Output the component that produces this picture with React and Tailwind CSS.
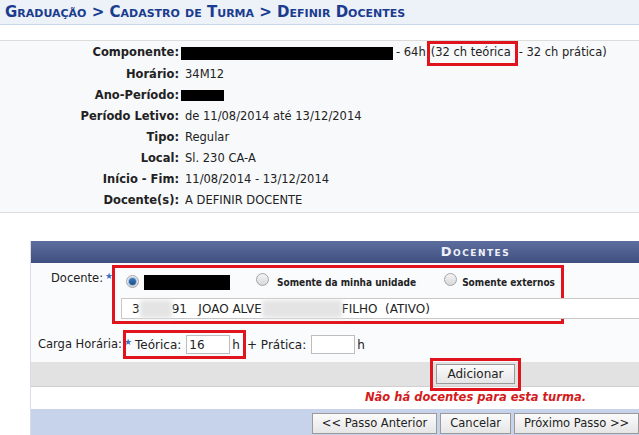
import React from "react";

const Red = ({ children, className = "" }) => (
  <span className={"inline-flex items-center border-[3px] border-[#e0141c] " + className}>{children}</span>
);

const Radio = ({ checked }) => (
  <span className="inline-flex h-[13px] w-[13px] items-center justify-center rounded-full border border-[#a5a5a5] bg-gradient-to-b from-[#f4f4f4] to-[#d8d8d8]">
    {checked && <span className="h-[7px] w-[7px] rounded-full bg-gradient-to-b from-[#3d7bbf] to-[#1d4f8a] ring-1 ring-[#9fc0e4]" />}
  </span>
);

const Star = () => <span className="ml-[2px] text-[9px] leading-none text-[#3b6fc0] self-start mt-[2px]">★</span>;

const Blur = ({ w }) => <span className={"inline-block h-[18px] bg-[#e4e4e4] blur-[2px] " + w} />;

const info = [
  ["Horário:", "34M12"],
  ["Ano-Período:", null],
  ["Período Letivo:", "de 11/08/2014 até 13/12/2014"],
  ["Tipo:", "Regular"],
  ["Local:", "Sl. 230 CA-A"],
  ["Início - Fim:", "11/08/2014 - 13/12/2014"],
  ["Docente(s):", "A DEFINIR DOCENTE"],
];

const Btn = ({ children }) => (
  <button className="h-[21px] whitespace-nowrap border border-[#9a9a9a] bg-gradient-to-b from-[#fbfbfb] to-[#e6e6e6] px-[9px] text-[11.5px] text-[#222]">
    {children}
  </button>
);

const cond = { fontFamily: "'DejaVu Sans Condensed', 'Liberation Sans', sans-serif" };

export default function App() {
  return (
    <div className="h-[435px] w-[639px] overflow-hidden bg-white text-[11.5px] text-[#222]" style={{ fontFamily: "'DejaVu Sans', Verdana, sans-serif" }}>
      <div className="flex h-[25px] items-center border-b border-[#c9d6ea] bg-[#edf1f8] pl-[5px]">
        <span className="whitespace-nowrap text-[15px] font-bold text-[#1a3c8f] [font-variant:small-caps]">Graduação &gt; Cadastro de Turma &gt; Definir Docentes</span>
      </div>

      <div className="mt-[15px] border-y border-[#dcdcdc] bg-[#f8f9fb] pb-[1px] pt-[1px]">
        <div className="flex h-[22px] items-center whitespace-nowrap">
          <div className="w-[180px] pr-[1px] text-right font-bold">Componente:</div>
          <span className="ml-[1px] h-[13px] w-[212px] bg-black" />
          <span className="ml-[3px]">- 64h</span>
          <Red className="ml-[1px] h-[25px] pl-[1px] pr-[4px]">(32 ch teórica</Red>
          <span className="ml-[1px]">- 32 ch prática)</span>
        </div>
        {info.map(([l, v]) => (
          <div key={l} className="flex h-[21px] items-center whitespace-nowrap">
            <div className="w-[180px] pr-[1px] text-right font-bold">{l}</div>
            {v ? <span className="ml-[5px]">{v}</span> : <span className="ml-[1px] h-[11px] w-[43px] bg-black" />}
          </div>
        ))}
      </div>

      <div className="ml-[30px] mt-[28px] w-[890px] border-l border-[#d8dde8] bg-[#fafbfd]">
        <div className="flex h-[22px] items-center justify-center bg-gradient-to-b from-[#5d6e9e] to-[#3f4f80] text-[13px] font-bold tracking-[1.5px] text-[#eef1fa] [font-variant:small-caps]">
          Docentes
        </div>

        <div className="flex pt-[2px]">
          <div className="flex w-[81px] pl-[20px] pt-[5px]">
            <span>Docente:</span>
            <Star />
          </div>
          <Red className="h-[59px] w-[452px] flex-col items-start pl-[6px] pt-[3px]">
            <div className="flex h-[22px] items-center whitespace-nowrap">
              <span className="ml-[5px]"><Radio checked /></span>
              <span className="ml-[5px] h-[15px] w-[86px] bg-black" />
              <span className="ml-[26px]"><Radio /></span>
              <span className="ml-[8px] text-[10px] font-bold" style={cond}>Somente da minha unidade</span>
              <span className="ml-[28px]"><Radio /></span>
              <span className="ml-[5px] text-[10px] font-bold" style={cond}>Somente externos</span>
            </div>
            <div className="mt-[5px] flex h-[21px] w-[600px] items-center border border-[#c8c8c8] bg-white pl-[10px] text-[12px] whitespace-pre">
              <span>3</span>
              <Blur w="w-[32px]" />
              <span>91   JOAO ALVE</span>
              <Blur w="w-[80px]" />
              <span>FILHO  (ATIVO)</span>
            </div>
          </Red>
        </div>

        <div className="flex h-[38px] items-center whitespace-nowrap pt-[3px]">
          <div className="flex items-start self-center pl-[7px]">
            <span>Carga Horária:</span>
            <Star />
          </div>
          <Red className="ml-[-9px] h-[29px] w-[123px] pl-[9px] text-[12px]">
            <span>Teórica:</span>
            <span className="ml-[5px] flex h-[19px] w-[44px] items-center border border-[#bdbdbd] bg-white pl-[2px] text-[12px]">16</span>
            <span className="ml-[2px]">h</span>
          </Red>
          <span className="ml-[1px] text-[12px]">+ Prática:</span>
          <span className="ml-[5px] h-[19px] w-[44px] border border-[#bdbdbd] bg-white" />
          <span className="ml-[2px] text-[12px]">h</span>
        </div>

        <div className="flex h-[25px] items-center justify-center border-b border-[#d0d0d0] bg-[#e2e2e2]">
          <Red className="h-[33px] px-[3px]">
            <button className="h-[20px] border border-[#9a9a9a] bg-gradient-to-b from-[#fbfbfb] to-[#e6e6e6] px-[10px] text-[12px] text-[#222]">Adicionar</button>
          </Red>
        </div>

        <div className="flex h-[22px] items-center justify-center bg-white text-[11.5px] font-bold italic text-[#d31b1b]">
          Não há docentes para esta turma.
        </div>

        <div className="flex h-[28px] items-center justify-center gap-[3px] bg-[#c6d3ea] pt-[1px]">
          <Btn>&lt;&lt; Passo Anterior</Btn>
          <Btn>Cancelar</Btn>
          <Btn>Próximo Passo &gt;&gt;</Btn>
        </div>
      </div>
    </div>
  );
}
